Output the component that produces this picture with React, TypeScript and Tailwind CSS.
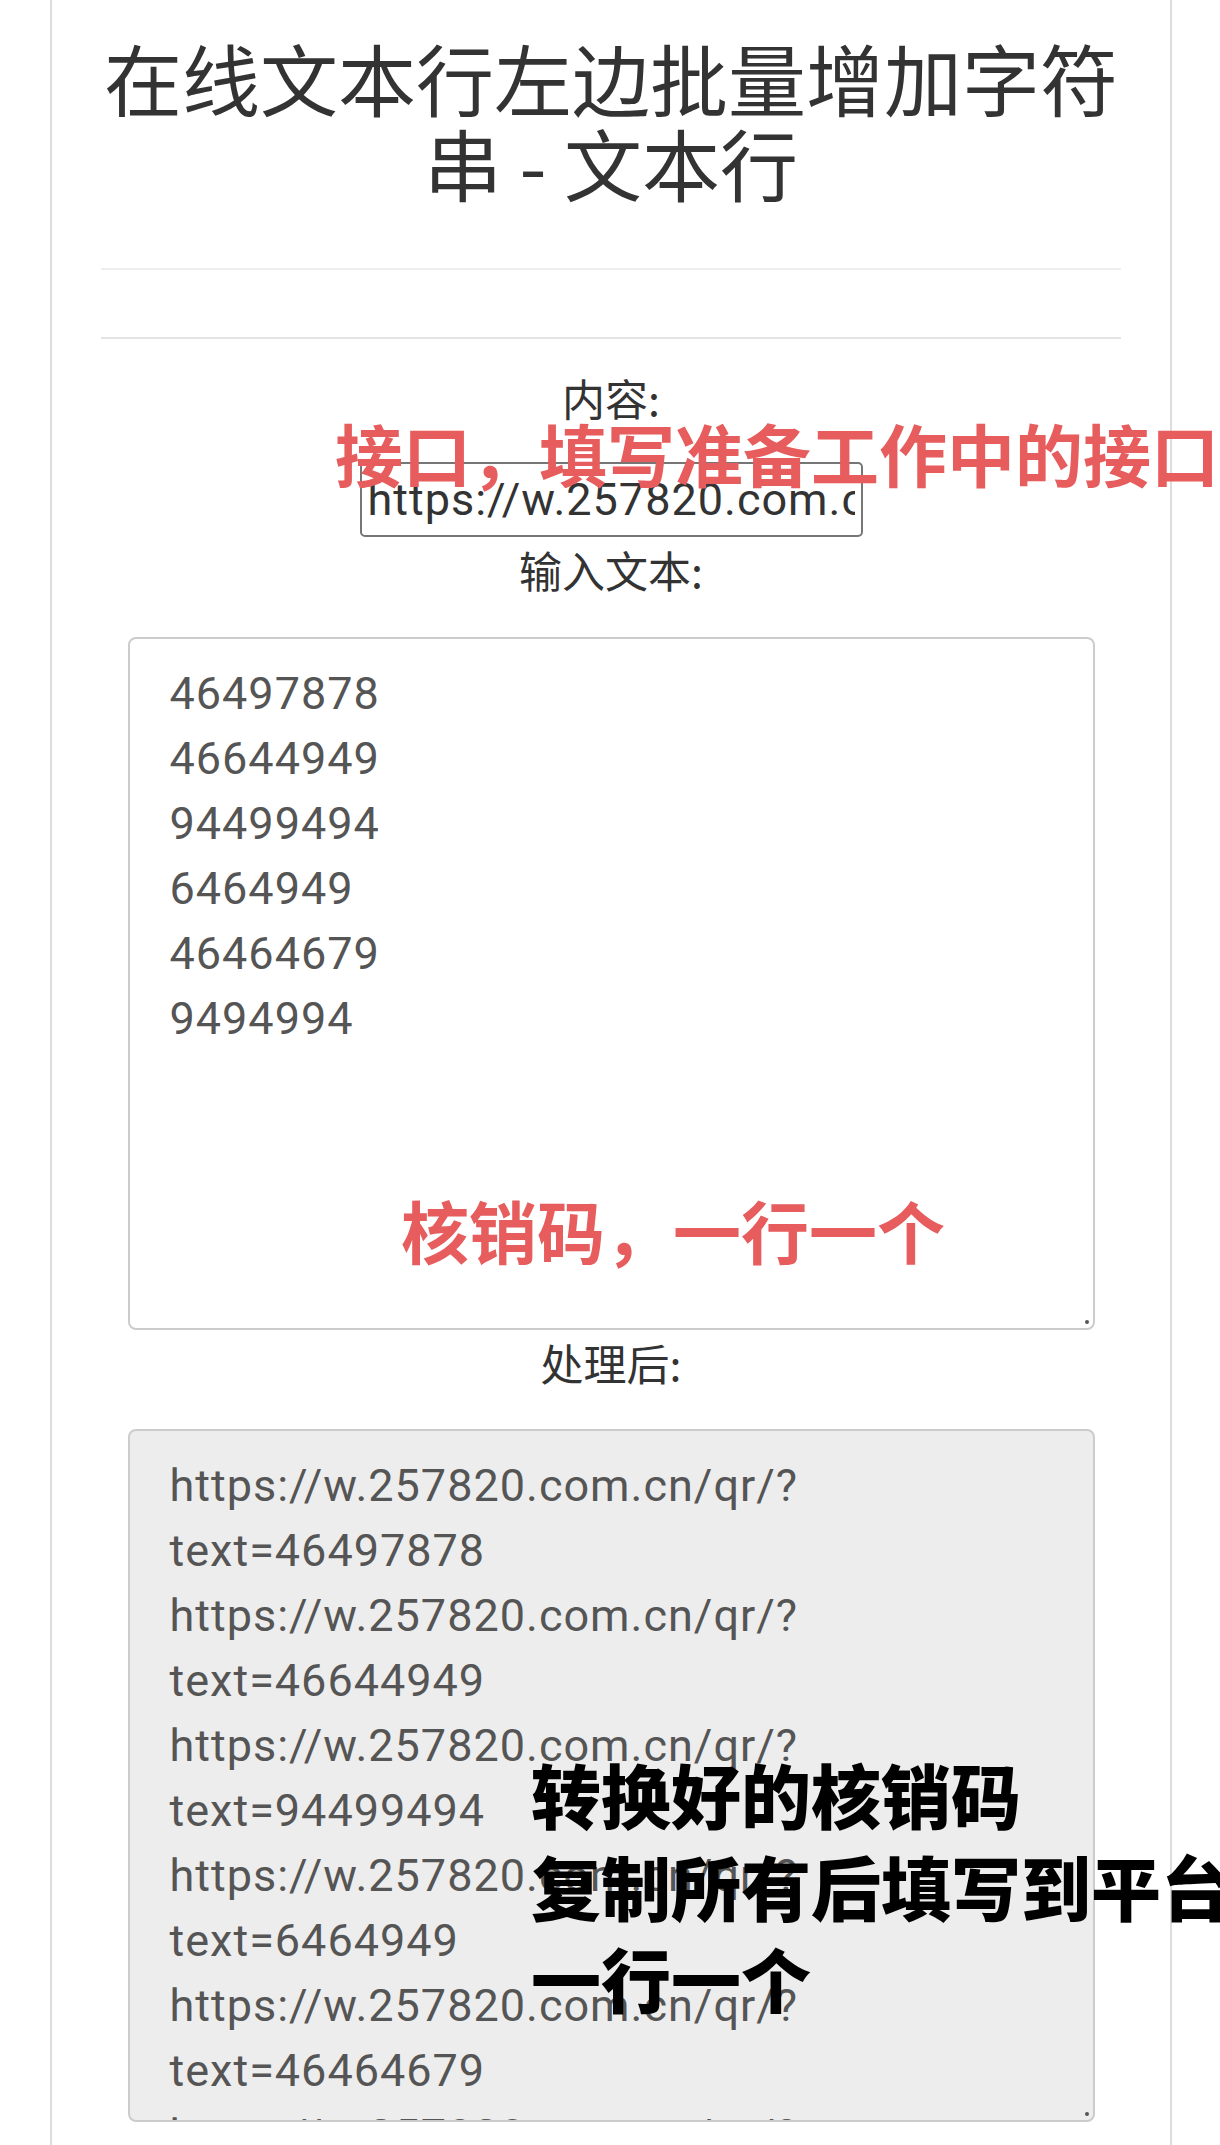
import React from "react";

const codes = ["46497878", "46644949", "94499494", "6464949", "46464679", "9494994"];
const prefix = "https://w.257820.com.cn/qr/?text=";

const output = codes.map((c) => `https://w.257820.com.cn/qr/?\ntext=${c}`).join("\n");

function Label({ children, className = "" }: { children: React.ReactNode; className?: string }) {
  return (
    <label className={`block text-center text-[43px] leading-[64px] text-[#333] font-['Noto_Sans_CJK_SC',sans-serif] ${className}`}>
      {children}
    </label>
  );
}

function ResizeDot() {
  return <span className="absolute bottom-[6px] right-[6px] w-[4px] h-[4px] rounded-full bg-[#555]" />;
}

export default function App() {
  return (
    <div className="relative w-[1220px] h-[2145px] overflow-hidden bg-white">
      <div className="ml-[50px] w-[1122px] min-h-[2145px] border-x-2 border-[#dddddd] px-[49px]">
        {/* Title */}
        <h1 className="pt-[35px] text-center text-[78px] leading-[85px] font-normal text-[#333] font-['Noto_Sans_CJK_SC',sans-serif]">
          在线文本行左边批量增加字符串 - 文本行
        </h1>

        <div className="mt-[63px] h-[2px] bg-[#eeeeee]" />
        <div className="mt-[67px] h-[2px] bg-[#e3e3e3]" />

        {/* Form */}
        <form className="flex flex-col items-center">
          <Label className="mt-[26px]">内容:</Label>
          <input
            type="text"
            readOnly
            value={prefix}
            className="mt-[33px] w-[503px] h-[75px] border-2 border-[#767676] rounded-[5px] px-[6px] text-[45px] tracking-[1px] text-[#333] bg-white outline-none font-['Roboto','Noto_Sans_CJK_SC',sans-serif]"
          />

          <Label>输入文本:</Label>
          <div className="relative mt-[36px]">
            <textarea
              readOnly
              value={codes.join("\n")}
              className="block w-[967px] h-[693px] resize-none overflow-hidden border-2 border-[#cccccc] rounded-[8px] bg-white pt-[22px] px-[40px] text-[45px] leading-[65px] tracking-[1px] text-[#555] outline-none font-['Roboto','Noto_Sans_CJK_SC',sans-serif]"
            />
            <ResizeDot />
          </div>

          <Label>处理后:</Label>
          <div className="relative mt-[35px]">
            <textarea
              readOnly
              value={output}
              className="block w-[967px] h-[693px] resize-none overflow-hidden border-2 border-[#cccccc] rounded-[8px] bg-[#ededed] pt-[22px] px-[40px] text-[45px] leading-[65px] tracking-[1px] text-[#555] outline-none font-['Roboto','Noto_Sans_CJK_SC',sans-serif]"
            />
            <ResizeDot />
          </div>
        </form>
      </div>

      {/* Annotations drawn over the page */}
      <p className="absolute left-[335px] top-[419px] whitespace-nowrap text-[68px] leading-none font-bold text-[#e75c5c] font-['Noto_Sans_CJK_SC',sans-serif]">
        接口，填写准备工作中的接口
      </p>
      <p className="absolute left-[401px] top-[1196px] whitespace-nowrap text-[68px] leading-none font-bold text-[#e75c5c] font-['Noto_Sans_CJK_SC',sans-serif]">
        核销码，一行一个
      </p>
      <div className="absolute left-[531px] top-[1748px] whitespace-nowrap text-[70px] leading-[92px] font-black text-black font-['Noto_Sans_CJK_SC',sans-serif]">
        <p>转换好的核销码</p>
        <p>复制所有后填写到平台</p>
        <p>一行一个</p>
      </div>
    </div>
  );
}
